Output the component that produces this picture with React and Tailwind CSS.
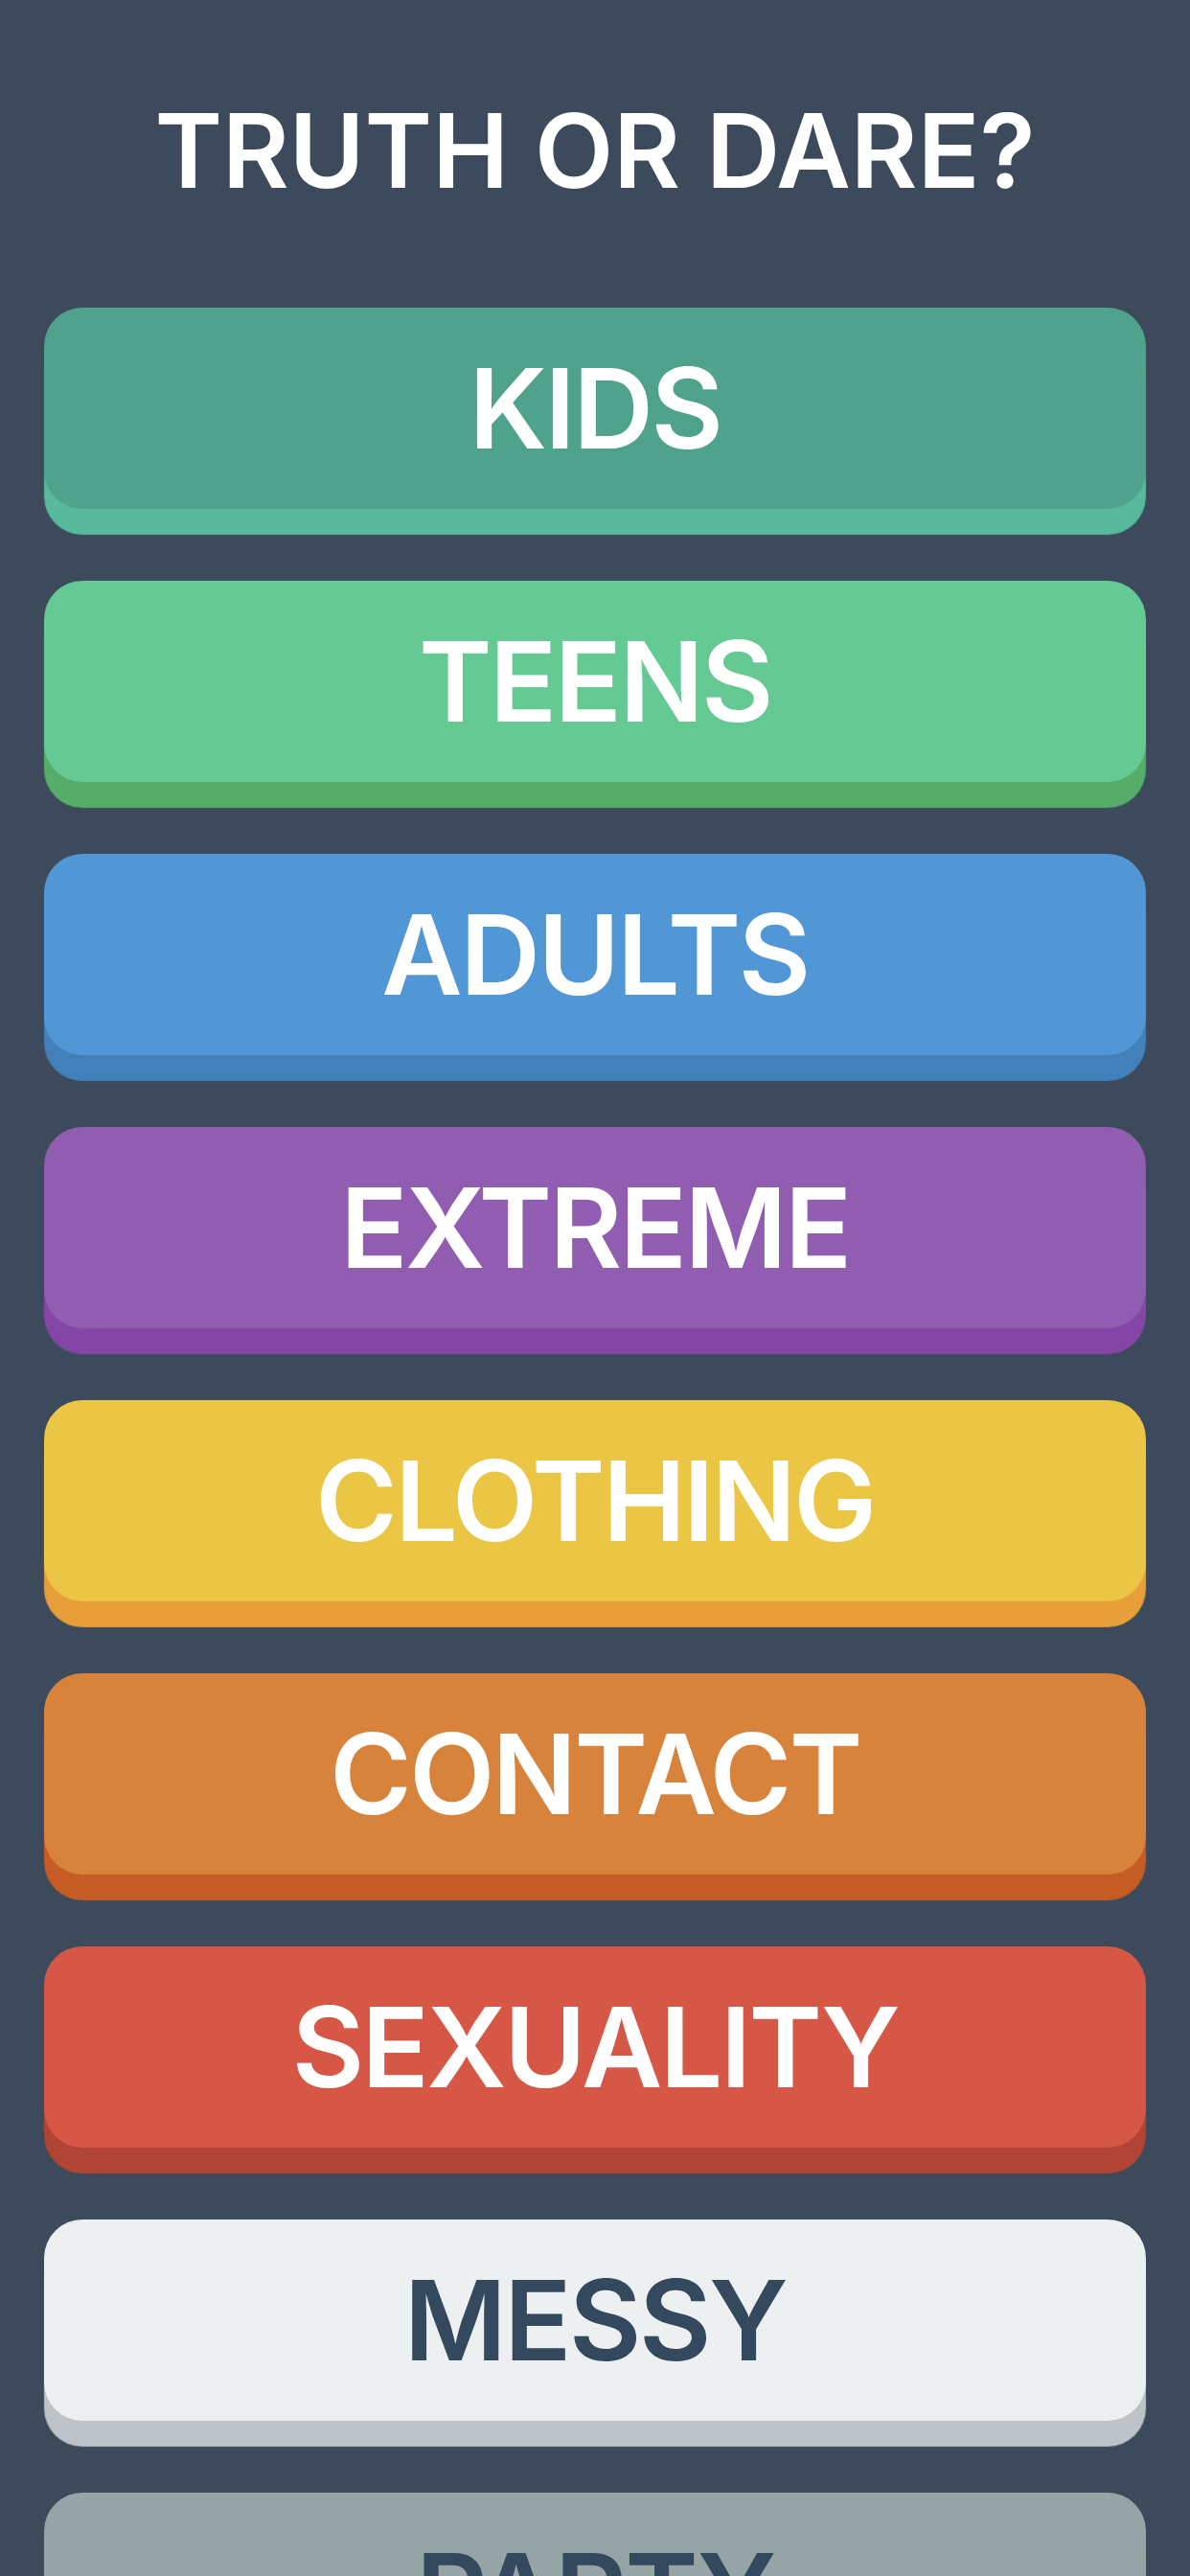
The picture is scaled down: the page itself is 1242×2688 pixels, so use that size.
import React from "react";

const items = [
  { label: "KIDS", face: "bg-[#4fa28b]", shadow: "shadow-[0_27px_1px_#58b99d]", text: "text-white" },
  { label: "TEENS", face: "bg-[#65c994]", shadow: "shadow-[0_27px_1px_#55ad69]", text: "text-white" },
  { label: "ADULTS", face: "bg-[#5197d6]", shadow: "shadow-[0_27px_1px_#4280b9]", text: "text-white" },
  { label: "EXTREME", face: "bg-[#915db0]", shadow: "shadow-[0_27px_1px_#8446a6]", text: "text-white" },
  { label: "CLOTHING", face: "bg-[#ebc645]", shadow: "shadow-[0_27px_1px_#e89f3a]", text: "text-white" },
  { label: "CONTACT", face: "bg-[#d8833c]", shadow: "shadow-[0_27px_1px_#c45c24]", text: "text-white" },
  { label: "SEXUALITY", face: "bg-[#d75746]", shadow: "shadow-[0_27px_1px_#b14434]", text: "text-white" },
  { label: "MESSY", face: "bg-[#ecf0f1]", shadow: "shadow-[0_27px_1px_#bdc3c7]", text: "text-[#34495e]" },
  { label: "PARTY", face: "bg-[#95a5a6]", shadow: "shadow-[0_27px_1px_#7f8c8d]", text: "text-[#34495e]" },
];

export default function App() {
  return (
    <div className="w-[1242px] h-[2688px] overflow-hidden bg-[#3c4a5c] font-['Inter',sans-serif]">
      <h1 className="pt-[102px] text-center text-white text-[107px] leading-[110px] font-semibold tracking-[0px]">
        TRUTH OR DARE?
      </h1>
      <div className="mt-[109px] px-[46px] flex flex-col gap-[75px]">
        {items.map((it) => (
          <button
            key={it.label}
            className={`h-[210px] w-full rounded-[40px] flex items-center justify-center ${it.face} ${it.shadow}`}
          >
            <span className={`text-[116px] leading-none font-semibold tracking-[-2.5px] ${it.text}`}>{it.label}</span>
          </button>
        ))}
      </div>
    </div>
  );
}
